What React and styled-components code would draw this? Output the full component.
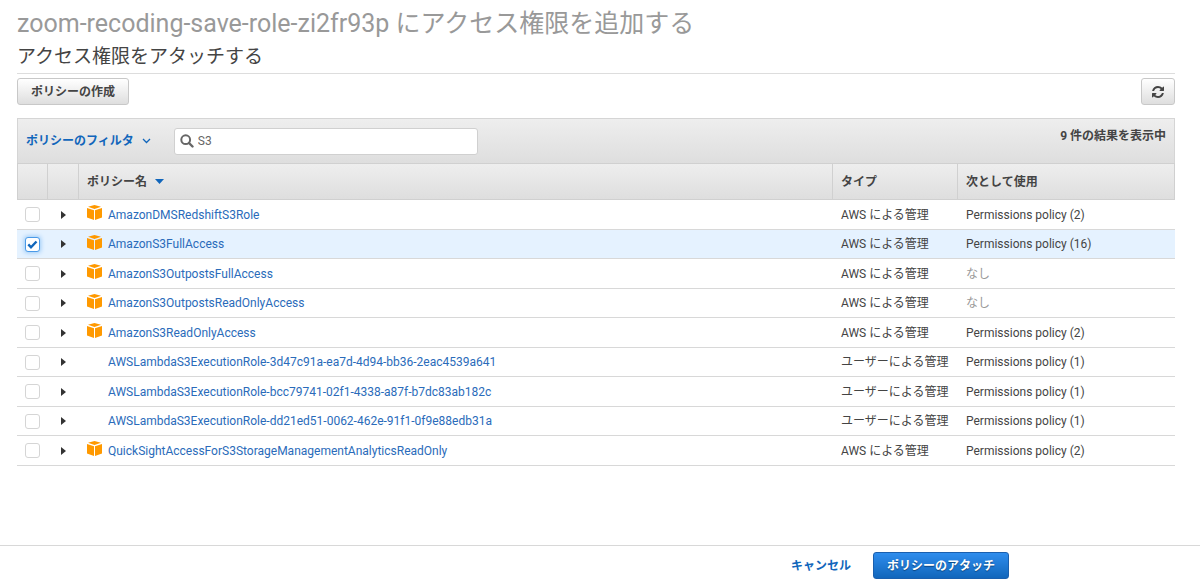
import { useState } from 'react'
import styled, { createGlobalStyle } from 'styled-components'

const GlobalStyle = createGlobalStyle`
  * {
    box-sizing: border-box;
  }

  body {
    margin: 0;
    background: #fff;
    color: #444;
    font-family: Roboto, 'Noto Sans CJK JP', sans-serif;
    font-size: 12px;
    line-height: 16px;
  }

  button,
  input {
    font-family: inherit;
    font-size: inherit;
    line-height: inherit;
  }
`

const Page = styled.div`
  display: flex;
  flex-direction: column;
  min-height: 100vh;
`

const Main = styled.main`
  flex: 1;
  padding: 8px 25px 0 17px;
`

const Title = styled.h1`
  margin: 0;
  font-size: 25px;
  font-weight: 400;
  line-height: 32px;
  color: #999;
`

const Subtitle = styled.h2`
  margin: 0;
  padding: 4px 0;
  border-bottom: 1px solid #ddd;
  font-size: 19px;
  font-weight: 400;
  line-height: 25px;
`

const Actions = styled.div`
  display: flex;
  justify-content: space-between;
  padding: 4px 0 13px;
`

const Button = styled.button`
  display: flex;
  align-items: center;
  justify-content: center;
  height: 27px;
  padding: 0 ${({ $icon }) => ($icon ? '9px' : '13px')};
  border: 1px solid ${({ $primary }) => ($primary ? '#1a5fae' : '#c8c8c8')};
  border-radius: 3px;
  background: ${({ $primary }) =>
    $primary
      ? 'linear-gradient(#2f8ded, #1166bb)'
      : 'linear-gradient(#fff, #dedede)'};
  color: ${({ $primary }) => ($primary ? '#fff' : '#444')};
  font-weight: 700;
  text-shadow: ${({ $primary }) => ($primary ? '0 1px 1px #0a4480' : 'none')};
  cursor: pointer;
`

const Panel = styled.section`
  border-top: 1px solid #d5d5d5;
`

const FilterBar = styled.div`
  display: flex;
  align-items: center;
  height: 44px;
  padding: 0 8px;
  border: 1px solid #d5d5d5;
  border-width: 0 1px;
  background: linear-gradient(#eee, #dedede);
`

const FilterButton = styled.button`
  display: flex;
  align-items: center;
  gap: 8px;
  margin-right: 23px;
  padding: 0;
  border: 0;
  background: none;
  color: #1166bb;
  font-weight: 700;
  cursor: pointer;
`

const SearchBox = styled.label`
  display: flex;
  align-items: center;
  gap: 4px;
  width: 304px;
  height: 27px;
  padding: 0 5px;
  border: 1px solid #d0d0d0;
  border-radius: 3px;
  background: #fff;
`

const SearchInput = styled.input`
  flex: 1;
  min-width: 0;
  padding: 0;
  border: 0;
  outline: 0;
  background: none;
  color: #666;
`

const ResultCount = styled.span`
  align-self: flex-start;
  margin-left: auto;
  padding-top: 9px;
  font-weight: 700;
`

const Table = styled.table`
  width: 100%;
  border-collapse: separate;
  border-spacing: 0;
  table-layout: fixed;
`

const HeadCell = styled.th`
  width: ${({ $width }) => $width || 'auto'};
  height: 37px;
  padding: 0 8px;
  border: 1px solid #d0d0d0;
  border-left-width: 0;
  background: linear-gradient(#eee, #dedede);
  font-weight: 700;
  text-align: left;

  &:first-child {
    border-left-width: 1px;
  }
`

const SortButton = styled.button`
  display: flex;
  align-items: center;
  gap: 8px;
  padding: 0;
  border: 0;
  background: none;
  color: inherit;
  font-weight: inherit;
  cursor: pointer;
`

const Row = styled.tr`
  height: 29px;
  background: ${({ $selected }) => ($selected ? '#e5f2ff' : '#fff')};

  &:nth-child(odd) {
    height: 30px;
  }
`

const Cell = styled.td`
  padding: 0 8px;
  border-bottom: 1px solid #d8d8d8;
  color: ${({ $muted }) => ($muted ? '#999' : '#444')};
  white-space: nowrap;
`

const Checkbox = styled.input`
  appearance: none;
  display: block;
  width: 15px;
  height: 15px;
  margin: 0;
  border: 1px solid #d5d5d5;
  border-radius: 3px;
  background: #fff;
  cursor: pointer;

  &:checked {
    border-color: #4a9ae8;
    box-shadow: 0 0 4px 1px #9ccbf7;
  }
`

const CheckWrap = styled.label`
  display: grid;
  width: 15px;

  > * {
    grid-area: 1 / 1;
  }

  svg {
    z-index: 1;
    place-self: center;
    pointer-events: none;
  }
`

const Expander = styled.button`
  display: block;
  padding: 2px 5px;
  border: 0;
  background: none;
  cursor: pointer;

  svg {
    display: block;
  }
`

const PolicyName = styled.div`
  display: flex;
  align-items: center;
`

const IconSlot = styled.span`
  width: 21px;
  height: 19px;
`

const PolicyLink = styled.a`
  color: #2a6bba;
  text-decoration: none;
`

const Footer = styled.footer`
  display: flex;
  align-items: center;
  justify-content: flex-end;
  gap: 22px;
  height: 35px;
  padding: 5px 191px 0 0;
  border-top: 1px solid #d8d8d8;
`

const CancelLink = styled.a`
  color: #1166bb;
  font-weight: 700;
  text-decoration: none;
`

const PolicyIcon = () => (
  <svg width="15" height="15" viewBox="0 0 15 15" aria-hidden="true">
    <path
      fill="#f90"
      d="M7.5 0L14 1.800 7.500 3.900 1 1.800zM0 3l7 2.200V15l-7-2.400zM15 3v9.600L8 15V5.200z"
    />
  </svg>
)

const SearchIcon = () => (
  <svg width="14" height="14" viewBox="0 0 14 14" aria-hidden="true">
    <circle cx="5.7" cy="5.7" r="4.4" fill="none" stroke="#666" strokeWidth="2" />
    <path d="M9 9l3.500 3.500" stroke="#666" strokeWidth="2.4" strokeLinecap="round" />
  </svg>
)

const RefreshIcon = () => (
  <svg width="14" height="12" viewBox="0 0 1536 1536" aria-hidden="true">
    <path
      fill="#444"
      d="M1511 928q0 5-1 7-64 268-268 434.500T764 1536q-146 0-282.500-55T238 1324l-129 129q-19 19-45 19t-45-19-19-45V960q0-26 19-45t45-19h448q26 0 45 19t19 45-19 45l-137 137q71 66 161 102t187 36q134 0 250-65t186-179q11-17 53-117 8-23 30-23h192q13 0 22.500 9.500t9.500 22.500zm25-800v448q0 26-19 45t-45 19h-448q-26 0-45-19t-19-45 19-45l138-138Q969 256 768 256q-134 0-250 65T332 500q-11 17-53 117-8 23-30 23H50q-13 0-22.500-9.500T18 608v-7q65-268 270-434.500T768 0q146 0 284 55.500T1297 212l130-129q19-19 45-19t45 19 19 45z"
    />
  </svg>
)

const policies = [
  { name: 'AmazonDMSRedshiftS3Role', aws: true, used: 2 },
  { name: 'AmazonS3FullAccess', aws: true, used: 16 },
  { name: 'AmazonS3OutpostsFullAccess', aws: true, used: 0 },
  { name: 'AmazonS3OutpostsReadOnlyAccess', aws: true, used: 0 },
  { name: 'AmazonS3ReadOnlyAccess', aws: true, used: 2 },
  {
    name: 'AWSLambdaS3ExecutionRole-3d47c91a-ea7d-4d94-bb36-2eac4539a641',
    used: 1,
  },
  {
    name: 'AWSLambdaS3ExecutionRole-bcc79741-02f1-4338-a87f-b7dc83ab182c',
    used: 1,
  },
  {
    name: 'AWSLambdaS3ExecutionRole-dd21ed51-0062-462e-91f1-0f9e88edb31a',
    used: 1,
  },
  {
    name: 'QuickSightAccessForS3StorageManagementAnalyticsReadOnly',
    aws: true,
    used: 2,
  },
]

const PolicyRow = ({ policy, selected, onToggle }) => (
  <Row $selected={selected}>
    <Cell>
      <CheckWrap>
        <Checkbox
          type="checkbox"
          aria-label={policy.name}
          checked={selected}
          onChange={onToggle}
        />
        {selected ? (
          <svg width="11" height="11" viewBox="0 0 11 11" aria-hidden="true">
            <path
              d="M1.300 5.400l2.700 2.900 5.500-5.800"
              fill="none"
              stroke="#1166bb"
              strokeWidth="2.400"
            />
          </svg>
        ) : null}
      </CheckWrap>
    </Cell>
    <Cell>
      <Expander type="button" aria-label={policy.name}>
        <svg width="5" height="8" viewBox="0 0 5 8" aria-hidden="true">
          <path d="M0 0l5 4-5 4z" fill="#333" />
        </svg>
      </Expander>
    </Cell>
    <Cell>
      <PolicyName>
        <IconSlot>{policy.aws ? <PolicyIcon /> : null}</IconSlot>
        <PolicyLink href="#">{policy.name}</PolicyLink>
      </PolicyName>
    </Cell>
    <Cell>{policy.aws ? 'AWS による管理' : 'ユーザーによる管理'}</Cell>
    <Cell $muted={!policy.used}>
      {policy.used ? `Permissions policy (${policy.used})` : 'なし'}
    </Cell>
  </Row>
)

const App = () => {
  const [query, setQuery] = useState('S3')
  const [selected, setSelected] = useState(['AmazonS3FullAccess'])

  const toggle = (name) =>
    setSelected((names) =>
      names.includes(name) ? names.filter((n) => n !== name) : [...names, name]
    )

  return (
    <Page>
      <GlobalStyle />
      <Main>
        <Title>zoom-recoding-save-role-zi2fr93p にアクセス権限を追加する</Title>
        <Subtitle>アクセス権限をアタッチする</Subtitle>
        <Actions>
          <Button type="button">ポリシーの作成</Button>
          <Button type="button" $icon aria-label="Refresh">
            <RefreshIcon />
          </Button>
        </Actions>

        <Panel>
          <FilterBar>
            <FilterButton type="button">
              ポリシーのフィルタ
              <svg width="9" height="6" viewBox="0 0 9 6" aria-hidden="true">
                <path
                  d="M1 1l3.500 3.500L8 1"
                  fill="none"
                  stroke="#1166bb"
                  strokeWidth="1.3"
                />
              </svg>
            </FilterButton>
            <SearchBox>
              <SearchIcon />
              <SearchInput
                type="text"
                aria-label="Search"
                value={query}
                onChange={(e) => setQuery(e.target.value)}
              />
            </SearchBox>
            <ResultCount>{policies.length} 件の結果を表示中</ResultCount>
          </FilterBar>

          <Table>
            <thead>
              <tr>
                <HeadCell $width="31px" />
                <HeadCell $width="31px" />
                <HeadCell>
                  <SortButton type="button">
                    ポリシー名
                    <svg width="9" height="5" viewBox="0 0 9 5" aria-hidden="true">
                      <path d="M0 0h9L4.500 5z" fill="#1166bb" />
                    </svg>
                  </SortButton>
                </HeadCell>
                <HeadCell $width="125px">タイプ</HeadCell>
                <HeadCell $width="217px">次として使用</HeadCell>
              </tr>
            </thead>
            <tbody>
              {policies.map((policy) => (
                <PolicyRow
                  key={policy.name}
                  policy={policy}
                  selected={selected.includes(policy.name)}
                  onToggle={() => toggle(policy.name)}
                />
              ))}
            </tbody>
          </Table>
        </Panel>
      </Main>

      <Footer>
        <CancelLink href="#">キャンセル</CancelLink>
        <Button type="button" $primary>
          ポリシーのアタッチ
        </Button>
      </Footer>
    </Page>
  )
}

export default App
